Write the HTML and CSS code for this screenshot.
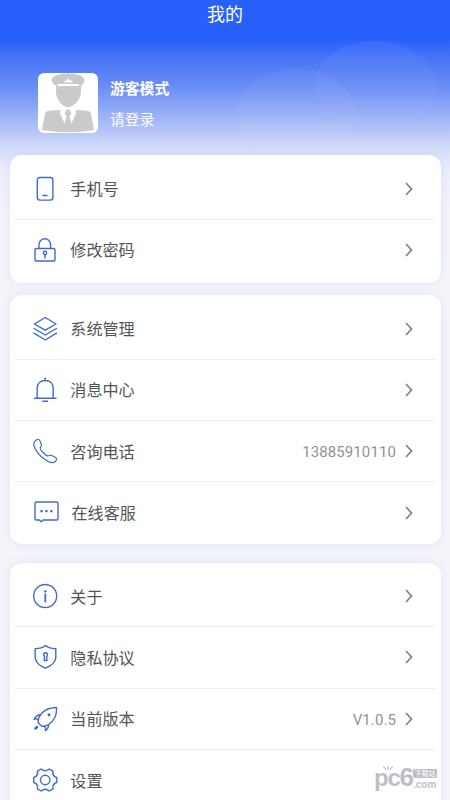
FILE: index.html
```
<!DOCTYPE html>
<html lang="zh-CN">
<head>
<meta charset="utf-8">
<title>我的</title>
<link rel="stylesheet" href="styles.css">
</head>
<body>
<div class="page">
  <header class="hero">
    <div class="bubble bubble-large"></div>
    <div class="bubble bubble-small"></div>
    <h1 class="title">我的</h1>
    <div class="profile">
      <div class="avatar">
        <svg viewBox="0 0 60 60" width="60" height="60">
          <g fill="#cacaca"><path d="M14 5Q18 .5 30 .5T46 5Q48 9 43 13V20C42 28 35 34 30 34S19 28 18 20V13Q12 9 14 5Z"/><path d="M4 57 7 41Q8 37.500 12 37.500L22 37 30 55 38 37 48 37.500Q52 37.500 53 41L56 57Q31 61.500 4 57Z"/></g>
          <path d="M19.500 11H41V13H19.500ZM26 9.500Q27 7 29 7L30 5 31 7Q34 7 34.500 9.500Z" fill="#fff"/>
          <path d="M22.500 37 22 41 27 51 30 43 33 51 38 41 37.500 37Z" fill="#fff"/>
          <path d="M28.500 36.500H31.500L33.500 40.500 31.500 43 33.500 51 30 59 26.500 51 28.500 43 26.500 40.500Z" fill="#cacaca"/>
        </svg>
      </div>
      <div class="who"><div class="name">游客模式</div><div class="login">请登录</div></div>
    </div>
  </header>
  <main class="cards">
    <section class="card card-account">
      <div class="row">
        <svg class="icon" viewBox="0 0 26 26"><rect x="5.300" y="1.500" width="15.600" height="22.600" rx="2.500"/><path d="M11 19.500H15"/></svg>
        <span class="label">手机号</span><svg class="arrow" viewBox="0 0 8 14"><path d="M1 1 6.500 7 1 13"/></svg>
      </div>
      <div class="row">
        <svg class="icon" viewBox="0 0 26 26"><rect x="3" y="11.500" width="20" height="12.500" rx="1.500"/><path d="M7 11.500V7.500a5.800 5.800 0 0 1 11.600 0V11.500M13 17.500V21"/><circle cx="13" cy="16" r="1.700"/></svg>
        <span class="label">修改密码</span><svg class="arrow" viewBox="0 0 8 14"><path d="M1 1 6.500 7 1 13"/></svg>
      </div>
    </section>
    <section class="card card-service">
      <div class="row">
        <svg class="icon" viewBox="0 0 26 26"><path d="M13.200 1.500 24 8 13.200 14.200 2.400 8ZM2 12.500 13.200 19 24.500 12.500M2 17.200 13.200 24 24.500 17.200"/></svg>
        <span class="label">系统管理</span><svg class="arrow" viewBox="0 0 8 14"><path d="M1 1 6.500 7 1 13"/></svg>
      </div>
      <div class="row">
        <svg class="icon" viewBox="0 0 26 26"><path d="M13.200 1V3.500M5.200 21V11.500C5.200 6.500 8.500 3.500 13.200 3.500S21.200 6.500 21.200 11.500V21M2.500 21.200H24M10.800 24.300H15.600"/></svg>
        <span class="label">消息中心</span><svg class="arrow" viewBox="0 0 8 14"><path d="M1 1 6.500 7 1 13"/></svg>
      </div>
      <div class="row">
        <svg class="icon thin" viewBox="0 0 26 26"><path d="M4 2.200C5.500 1 7.300 1.200 8 3L9.300 6.200C10 8 8.800 8.600 8.200 9.700C7.500 11.300 13.500 17.500 15.500 17.900C17 18.200 17.800 16.700 19.300 17.200L23.200 19.200C25 20.200 24.800 22.200 23.300 23.500C21 25.500 17.200 24.600 13 21.600C8 18 3.800 13 2.200 8.500C1.300 5.700 2 3.600 4 2.200Z"/></svg>
        <span class="label">咨询电话</span><span class="value">13885910110</span><svg class="arrow" viewBox="0 0 8 14"><path d="M1 1 6.500 7 1 13"/></svg>
      </div>
      <div class="row row-chat">
        <svg class="icon" viewBox="0 0 26 26"><path d="M3.500 2H23.500Q25 2 25 3.500V18.500Q25 20 23.500 20H10L8.200 21.800 6.500 20H3.500Q2 20 2 18.500V3.500Q2 2 3.500 2Z"/><path class="solid" d="M7.500 10h2.200v2.200H7.500zM12.400 10h2.200v2.200h-2.200zM17.300 10h2.200v2.200h-2.200z"/></svg>
        <span class="label">在线客服</span><svg class="arrow" viewBox="0 0 8 14"><path d="M1 1 6.500 7 1 13"/></svg>
      </div>
    </section>
    <section class="card card-about">
      <div class="row">
        <svg class="icon" viewBox="0 0 26 26"><circle cx="13.200" cy="13" r="11.500"/><path d="M13.300 11.300V18.500" stroke-width="1.800"/><circle class="solid" cx="13.300" cy="8.400" r="1.200"/></svg>
        <span class="label">关于</span><svg class="arrow" viewBox="0 0 8 14"><path d="M1 1 6.500 7 1 13"/></svg>
      </div>
      <div class="row">
        <svg class="icon" viewBox="0 0 26 26"><path d="M13.500 1.500Q17 4.500 23.800 4.700V13C23.800 18.500 18 22.500 13.500 24.200C9 22.500 3.200 18.500 3.200 13V4.700Q10 4.500 13.500 1.500Z"/><path d="M12.500 12.500C10.500 10 12 8.800 13.500 8.800S16.500 10 14.700 12.500L15 16.500H12.200Z"/></svg>
        <span class="label">隐私协议</span><svg class="arrow" viewBox="0 0 8 14"><path d="M1 1 6.500 7 1 13"/></svg>
      </div>
      <div class="row">
        <svg class="icon" viewBox="0 0 26 26"><path d="M24.500 1.500C25 8 22.500 14.500 16.500 18.500Q12.500 21 9.500 20L6.500 17C5.500 14 7 10.500 9.500 7.500C13.500 3 18 1.500 24.500 1.500ZM8.500 8.800C5 8.500 3.500 11 2 13.300Q4 12.200 6.500 13.800M16.800 18.300C16.500 21 15.500 23.500 13.300 24.500Q14 21.500 12.300 20"/><circle class="solid" cx="17" cy="8.700" r="1.500"/><path d="M3.500 22.500 5 21" stroke-width="2.500"/></svg>
        <span class="label">当前版本</span><span class="value">V1.0.5</span><svg class="arrow" viewBox="0 0 8 14"><path d="M1 1 6.500 7 1 13"/></svg>
      </div>
      <div class="row">
        <svg class="icon" viewBox="0 0 26 26"><path d="M9.200 2Q13.200 5.500 17.200 2L21 4.200Q20 9.300 24.800 10.500V15.500Q20 16.700 21 21.800L17.200 24Q13.200 20.500 9.200 24L5.400 21.800Q6.400 16.700 1.700 15.500V10.500Q6.400 9.300 5.400 4.200Z"/><circle cx="13.200" cy="13" r="4.700"/></svg>
        <span class="label">设置</span>
      </div>
    </section>
  </main>
  <div class="watermark">
    <svg class="sprout" viewBox="0 0 12 6" width="12" height="6"><path d="M6 5V1M4 5Q3 2 1 2M8 5Q9 2 11 2"/></svg>
    <span class="mark">pc<b>6</b></span>
    <span class="mark-side"><span class="mark-tag">下载站</span><span class="mark-com">.com</span></span>
  </div>
</div>
</body>
</html>
```
FILE: styles.css
```
* { box-sizing: border-box; }
body {
  margin: 0;
  font-family: "Noto Sans", "Noto Sans CJK SC", sans-serif;
  color: #555;
}
.page {
  position: relative;
  height: 800px;
  overflow: hidden;
  background: linear-gradient(#2860fb 0, #2860fb 40px, #4472f6 56px, #6b8ef6 87px, #a3b7f7 120px, #d3dbf8 148px, #eceffb 172px, #f4f4fa 210px, #f4f5fa 100%);
}
.hero { position: relative; height: 155px; }
.title {
  margin: 0;
  height: 28px;
  font-size: 18px;
  font-weight: 400;
  line-height: 28px;
  text-align: center;
  color: #fff;
}
.bubble { position: absolute; border-radius: 50%; }
.bubble-large {
  left: 314px; top: 41px; width: 122px; height: 90px;
  background: linear-gradient(rgba(255,255,255,.06), rgba(255,255,255,0));
}
.bubble-small {
  left: 236px; top: 69px; width: 120px; height: 90px;
  background: linear-gradient(rgba(255,255,255,.05), rgba(255,255,255,0));
}
.profile { display: flex; gap: 12px; padding: 45px 0 0 38px; }
.avatar { width: 60px; height: 60px; border-radius: 6px; overflow: hidden; background: #fff; }
.avatar svg { display: block; }
.who { padding-top: 3px; font-size: 14.800px; line-height: 24px; color: #fff; }
.name { font-weight: 700; }
.login { margin-top: 7px; }
.cards { display: flex; flex-direction: column; margin: 0 9px 0 10px; }
.card {
  border-radius: 12px;
  background: #fff;
  box-shadow: 0 0 10px rgba(190,206,252,.45);
  padding: 3px 5px;
}
.card-account { height: 128px; padding-top: 3.500px; margin-bottom: 12px; }
.card-service { height: 249px; padding-top: 3.500px; margin-bottom: 19px; }
.card-about { height: 260px; }
.row {
  display: flex;
  align-items: center;
  height: 61.300px;
  padding: 0 22px 0 17px;
  border-bottom: 1px solid #eef0f4;
}
.row:last-child { border-bottom-color: transparent; }
.row-chat .icon { margin: 0 -1px 0 1px; }
.row-chat .label { margin-left: 13.500px; }
.icon {
  width: 26px;
  height: 26px;
  fill: none;
  stroke: #416bcb;
  stroke-width: 1.400;
  stroke-linejoin: round;
  stroke-linecap: round;
}
.thin { stroke-width: 1.200; }
.icon .solid { fill: #416bcb; stroke: none; }
.label { flex: 1; margin-left: 12.300px; font-size: 16.100px; line-height: 24px; padding-top: 1px; }
.value { margin-right: 9px; padding-top: 2px; font-family: Roboto, sans-serif; font-size: 15px; letter-spacing: .1px; color: #929292; }
.arrow { width: 8px; height: 14px; margin-right: 1px; fill: none; stroke: #858585; stroke-width: 1.800; }
.watermark {
  position: absolute;
  left: 374px;
  top: 762px;
  display: flex;
  color: #bcbfc8;
  font-family: "Liberation Sans", sans-serif;
}
.sprout { position: absolute; left: 8px; top: 3px; fill: none; stroke: #bcbfc8; stroke-width: 1.200; }
.mark { width: 39px; font-size: 24px; line-height: 30px; font-weight: 700; letter-spacing: -1.200px; }
.mark b { font-size: 26px; }
.mark-side { display: flex; flex-direction: column; padding-top: 7px; }
.mark-tag {
  width: 24px;
  height: 9px;
  border-radius: 1px;
  background: #bcbfc8;
  color: #fff;
  font-family: "Noto Sans CJK SC", sans-serif;
  font-size: 7px;
  line-height: 9px;
  text-align: center;
}
.mark-com { margin-top: 1px; font-size: 10px; line-height: 11px; font-weight: 700; }
```
